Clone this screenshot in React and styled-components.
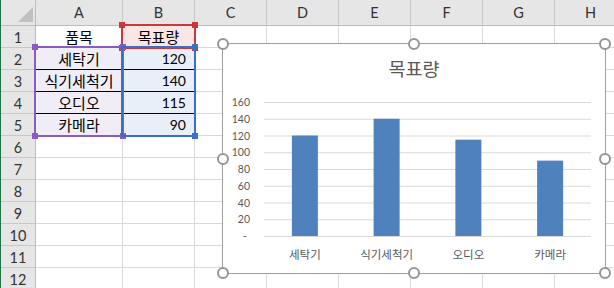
import React from 'react';
import styled, { createGlobalStyle } from 'styled-components';

const GlobalStyle = createGlobalStyle`
  html, body { margin: 0; padding: 0; background: #fff; overflow: hidden; }
  body { font-family: "Noto Sans CJK KR", "Noto Sans", sans-serif; }
`

const COLS = ['A', 'B', 'C', 'D', 'E', 'F', 'G', 'H'];
const ROWS = 12;

const data = [
  { name: '세탁기', value: 120 },
  { name: '식기세척기', value: 140 },
  { name: '오디오', value: 115 },
  { name: '카메라', value: 90 },
];

const Sheet = styled.div`
  position: relative;
  display: grid;
  grid-template-columns: 35px 87px repeat(7, 72px);
  grid-template-rows: 26px repeat(${ROWS}, 22px);
  width: 614px;
  height: 288px;
  overflow: hidden;
  border-left: 1px solid #217346;
  box-sizing: border-box;
`

const at = p => `
  grid-row: ${p.$row};
  grid-column: ${p.$col};
`

const Corner = styled.div`
  ${at}
  position: relative;
  background: #e6e6e6;
  border-right: 1px solid #bcbcbc;
  border-bottom: 1px solid #bcbcbc;
  box-sizing: border-box;
  &::after {
    content: '';
    position: absolute;
    right: 2px;
    bottom: 3px;
    width: 0;
    height: 0;
    border-left: 15px solid transparent;
    border-bottom: 15px solid #c0c0c0;
  }
`

const Head = styled.div`
  ${at}
  display: flex;
  align-items: center;
  justify-content: center;
  background: #e6e6e6;
  color: #333;
  font-family: Lato, "Liberation Sans", sans-serif;
  font-size: 14.5px;
  border-right: 1px solid ${p => (p.$side ? '#bcbcbc' : '#c8c8c8')};
  border-bottom: 1px solid ${p => (p.$side ? '#c8c8c8' : '#bcbcbc')};
  box-sizing: border-box;
  padding-top: ${p => (p.$side ? '1px' : '0')};
`

const Cell = styled.div`
  ${at}
  display: flex;
  align-items: center;
  justify-content: ${p => (p.$num ? 'flex-end' : 'center')};
  padding-right: ${p => (p.$num ? '8px' : '0')};
  background: ${p => p.$bg || '#fff'};
  color: #000;
  font-family: ${p => (p.$num ? 'Lato, "Liberation Sans", sans-serif' : '"Noto Sans CJK KR", sans-serif')};
  font-size: ${p => (p.$num ? '14px' : '15px')};
  border-right: 1px solid #d9d9d9;
  border-bottom: 1px solid ${p => (p.$line ? '#000' : '#d9d9d9')};
  box-sizing: border-box;
  white-space: nowrap;
`

const Range = styled.div`
  ${at}
  position: relative;
  z-index: 1;
  margin: -2px -1px -1px -2px;
  border: 2px solid ${p => p.$color};
  pointer-events: none;
`

const Knob = styled.span`
  position: absolute;
  width: 6px;
  height: 6px;
  background: ${p => p.$color};
  left: ${p => (p.$r ? 'auto' : '-4px')};
  right: ${p => (p.$r ? '-4px' : 'auto')};
  top: ${p => (p.$b ? 'auto' : '-4px')};
  bottom: ${p => (p.$b ? '-4px' : 'auto')};
`

const Chart = styled.div`
  position: absolute;
  z-index: 2;
  left: 221px;
  top: 43px;
  width: 384px;
  height: 231px;
  background: #fff;
  border: 1px solid #a0a0a0;
  box-sizing: border-box;
  display: flex;
  flex-direction: column;
`

const Title = styled.div`
  height: 44px;
  display: flex;
  align-items: center;
  justify-content: center;
  padding-top: 3px;
  box-sizing: border-box;
  color: #595959;
  font-family: "Noto Sans CJK KR", sans-serif;
  font-size: 18.5px;
`

const Handle = styled.span`
  position: absolute;
  left: ${p => p.$x}%;
  top: ${p => p.$y}%;
  width: 8px;
  height: 8px;
  border: 2px solid #959595;
  border-radius: 50%;
  background: #fff;
  transform: translate(-50%, -50%);
`

const AxisText = styled.text`
  fill: #595959;
  font-family: Lato, "Liberation Sans", sans-serif;
  font-size: 10.5px;
`

const CatText = styled.text`
  fill: #595959;
  font-family: "Noto Sans CJK KR", sans-serif;
  font-size: 11.5px;
`

const Plot = () => {
  const x0 = 41, x1 = 368, yTop = 14, yZero = 148;
  const scale = (yZero - yTop) / 160;
  const band = (x1 - x0) / data.length;
  const ticks = [160, 140, 120, 100, 80, 60, 40, 20, 0];
  return (
    <svg width="382" height="184" style={{ display: 'block' }}>
      {ticks.map(t => {
        const y = yZero - t * scale;
        return (
          <g key={t}>
            <line x1={x0} x2={x1} y1={y + 0.5} y2={y + 0.5} stroke="#d9d9d9" strokeWidth="1" />
            <AxisText x={t === 0 ? 24 : 27} y={y + 4} textAnchor="end">{t === 0 ? '-' : t}</AxisText>
          </g>
        );
      })}
      {data.map((d, i) => {
        const cx = x0 + band * (i + 0.5);
        const h = d.value * scale;
        return (
          <g key={d.name}>
            <rect x={cx - 13} y={yZero - h} width="26" height={h} fill="#4f81bd" />
            <CatText x={cx} y={171} textAnchor="middle">{d.name}</CatText>
          </g>
        );
      })}
    </svg>
  );
};

const handles = [
  [0, 0], [50, 0], [100, 0],
  [0, 50], [100, 50],
  [0, 100], [50, 100], [100, 100],
];

const ranges = [
  { row: '2 / 3', col: '3 / 4', color: '#c8383d', knobs: [[0, 0], [1, 0], [0, 1], [1, 1]] },
  { row: '3 / 7', col: '2 / 3', color: '#8a5bc2', knobs: [[0, 0], [1, 0], [0, 1], [1, 1]] },
  { row: '3 / 7', col: '3 / 4', color: '#3a6fc8', knobs: [[1, 0], [1, 1]] },
];

const cellFor = (r, c) => {
  if (r === 1 && c === 0) return { text: '품목' };
  if (r === 1 && c === 1) return { text: '목표량', bg: '#fbe6e6' };
  if (r >= 2 && r <= 5) {
    const d = data[r - 2];
    const line = r <= 4;
    if (c === 0) return { text: d.name, bg: '#f1edf7', line };
    if (c === 1) return { text: d.value, bg: '#e9eff9', num: true, line };
  }
  return {};
};

export default function App() {
  return (
    <>
      <GlobalStyle />
      <Sheet>
        <Corner $row={1} $col={1} />
        {COLS.map((c, ci) => <Head key={c} $row={1} $col={ci + 2}>{c}</Head>)}
        {Array.from({ length: ROWS }, (_, i) => i + 1).map(r => (
          <React.Fragment key={r}>
            <Head $side $row={r + 1} $col={1}>{r}</Head>
            {COLS.map((c, ci) => {
              const cell = cellFor(r, ci);
              return (
                <Cell key={c} $row={r + 1} $col={ci + 2} $bg={cell.bg} $num={cell.num} $line={cell.line}>
                  {cell.text}
                </Cell>
              );
            })}
          </React.Fragment>
        ))}

        {ranges.map(rg => (
          <Range key={rg.color} $row={rg.row} $col={rg.col} $color={rg.color}>
            {rg.knobs.map(([r, b]) => <Knob key={`${r}${b}`} $color={rg.color} $r={r} $b={b} />)}
          </Range>
        ))}

        <Chart>
          <Title>목표량</Title>
          <Plot />
          {handles.map(([x, y]) => <Handle key={`${x}-${y}`} $x={x} $y={y} />)}
        </Chart>
      </Sheet>
    </>
  );
}
